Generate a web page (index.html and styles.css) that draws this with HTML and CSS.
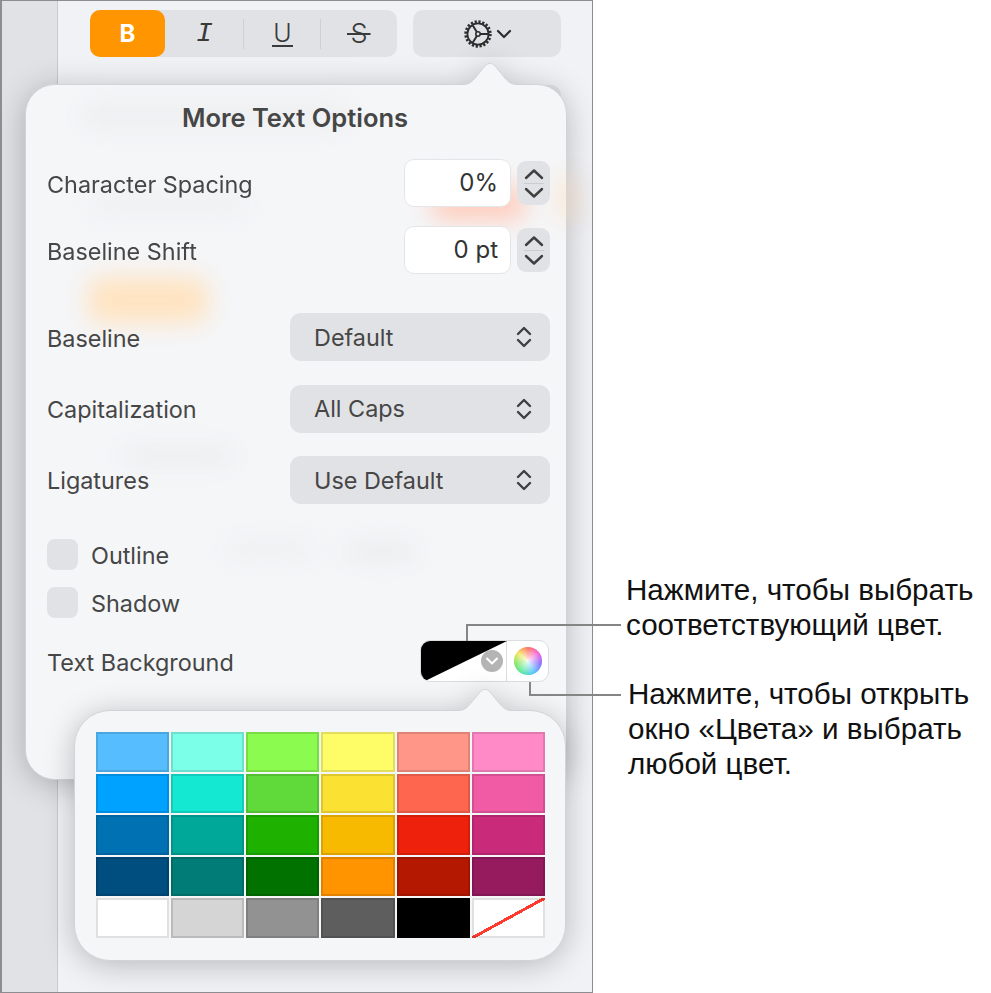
FILE: index.html
```html
<!DOCTYPE html>
<html lang="ru">
<head>
    <meta charset="UTF-8">
    <title>More Text Options</title>
    <link rel="stylesheet" href="styles.css">
</head>
<body>
    <div class="page">
        <div class="window">
            <div class="sidebar"></div>
            <div class="main">
                <div class="toolbar">
                    <div class="style-group">
                        <div class="style-btn style-bold">B</div>
                        <div class="style-btn style-italic">I</div>
                        <div class="style-btn style-underline"><span>U</span></div>
                        <div class="style-btn style-strike"><span>S</span></div>
                    </div>
                    <div class="gear-btn">
                        <svg class="gear-icon" width="30" height="30" viewBox="0 0 30 30">
                            <circle cx="15" cy="15" r="12.4" fill="none" stroke="#2d2d2d" stroke-width="2.6" stroke-dasharray="2.2 1.7"/>
                            <circle cx="15" cy="15" r="10.6" fill="none" stroke="#2d2d2d" stroke-width="1.8"/>
                            <circle cx="15" cy="15" r="2.2" fill="none" stroke="#2d2d2d" stroke-width="1.6"/>
                            <path d="M17 15H25M14 13.2L9.8 6.5M14 16.8L9.8 23.5" fill="none" stroke="#2d2d2d" stroke-width="2"/>
                        </svg>
                        <svg width="16" height="10" viewBox="0 0 16 10">
                            <path d="M2 2L8 8L14 2" fill="none" stroke="#2d2d2d" stroke-width="2.2" stroke-linecap="round" stroke-linejoin="round"/>
                        </svg>
                    </div>
                </div>
                <div class="covered-row"></div>
            </div>

            <div class="popover options">
                <svg class="arrow arrow-options" width="64" height="24" viewBox="0 0 64 24">
                    <path d="M0 22.5H4C10 22.5 13 20 17 15L26 4C29 0.5 33 0.5 36 4L45 15C49 20 52 22.5 58 22.5H64V24H0Z" fill="#f5f6f8"/>
                    <path d="M0 22.5H4C10 22.5 13 20 17 15L26 4C29 0.5 33 0.5 36 4L45 15C49 20 52 22.5 58 22.5H64" fill="none" stroke="#d2d3d6"/>
                </svg>
                <span class="smear smear-title"></span>
                <span class="smear smear-sub"></span>
                <span class="smear smear-red"></span>
                <span class="smear smear-edge"></span>
                <span class="smear smear-orange"></span>
                <span class="smear smear-mid"></span>
                <span class="smear smear-low"></span>
                <span class="smear smear-low-right"></span>

                <h2 class="title">More Text Options</h2>

                <div class="row row-first">
                    <span class="label">Character Spacing</span>
                    <div class="spin">
                        <div class="spin-input">0%</div>
                        <div class="stepper">
                            <svg width="22" height="12" viewBox="0 0 22 12"><path d="M3 10L11 2.5L19 10" class="chev"/></svg>
                            <i class="stepper-line"></i>
                            <svg width="22" height="12" viewBox="0 0 22 12"><path d="M3 2L11 9.5L19 2" class="chev"/></svg>
                        </div>
                    </div>
                </div>
                <div class="row row-second">
                    <span class="label">Baseline Shift</span>
                    <div class="spin">
                        <div class="spin-input">0 pt</div>
                        <div class="stepper">
                            <svg width="22" height="12" viewBox="0 0 22 12"><path d="M3 10L11 2.5L19 10" class="chev"/></svg>
                            <i class="stepper-line"></i>
                            <svg width="22" height="12" viewBox="0 0 22 12"><path d="M3 2L11 9.5L19 2" class="chev"/></svg>
                        </div>
                    </div>
                </div>

                <div class="row row-select-first">
                    <span class="label">Baseline</span>
                    <div class="select">Default
                        <svg width="16" height="24" viewBox="0 0 16 24"><path d="M2 9L8 3L14 9M2 15L8 21L14 15" class="chev"/></svg>
                    </div>
                </div>
                <div class="row row-select">
                    <span class="label">Capitalization</span>
                    <div class="select">All Caps
                        <svg width="16" height="24" viewBox="0 0 16 24"><path d="M2 9L8 3L14 9M2 15L8 21L14 15" class="chev"/></svg>
                    </div>
                </div>
                <div class="row row-select">
                    <span class="label">Ligatures</span>
                    <div class="select">Use Default
                        <svg width="16" height="24" viewBox="0 0 16 24"><path d="M2 9L8 3L14 9M2 15L8 21L14 15" class="chev"/></svg>
                    </div>
                </div>

                <div class="check check-first"><span class="box"></span><span class="label">Outline</span></div>
                <div class="check"><span class="box"></span><span class="label">Shadow</span></div>

                <div class="row row-well">
                    <span class="label">Text Background</span>
                    <div class="well">
                        <div class="well-fill">
                            <svg width="86" height="40" viewBox="0 0 86 40"><path d="M0 0H86L4 40H0Z" fill="#000"/></svg>
                            <span class="well-menu">
                                <svg width="14" height="9" viewBox="0 0 14 9"><path d="M2 1.5L7 6.5L12 1.5" fill="none" stroke="#fff" stroke-width="2" stroke-linecap="round" stroke-linejoin="round"/></svg>
                            </span>
                        </div>
                        <div class="well-wheel"><span class="wheel"></span></div>
                    </div>
                </div>
            </div>

            <div class="popover palette">
                <svg class="arrow arrow-palette" width="64" height="24" viewBox="0 0 64 24">
                    <path d="M0 22.5H4C10 22.5 13 20 17 15L26 4C29 0.5 33 0.5 36 4L45 15C49 20 52 22.5 58 22.5H64V24H0Z" fill="#f5f6f8"/>
                    <path d="M0 22.5H4C10 22.5 13 20 17 15L26 4C29 0.5 33 0.5 36 4L45 15C49 20 52 22.5 58 22.5H64" fill="none" stroke="#d2d3d6"/>
                </svg>
                <div class="swatches" id="swatches"></div>
            </div>
        </div>

        <div class="callouts">
            <p class="callout callout-first">Нажмите, чтобы выбрать соответствующий цвет.</p>
            <p class="callout callout-second">Нажмите, чтобы открыть окно «Цвета» и выбрать любой цвет.</p>
        </div>
        <div class="leader leader-fill"></div>
        <div class="leader leader-wheel"></div>
    </div>

    <script>
        const colors = [
            '#56bdff', '#7bffe9', '#8bfb4f', '#fffd67', '#ff9688', '#ff8ac7',
            '#00a2ff', '#15e8d2', '#60d93a', '#fbe232', '#ff6650', '#f15ba5',
            '#0072b4', '#00a89a', '#1eb100', '#f8ba00', '#ee220c', '#c92b7a',
            '#004d80', '#017c76', '#017100', '#ff9300', '#b51800', '#951a5e',
            '#ffffff', '#d5d5d5', '#929292', '#5e5e5e', '#000000', null
        ];
        const grid = document.getElementById('swatches');
        colors.forEach(color => {
            const swatch = document.createElement('div');
            swatch.className = color ? 'swatch' : 'swatch swatch-none';
            if (color) swatch.style.background = color;
            grid.appendChild(swatch);
        });
    </script>
</body>
</html>
```

FILE: styles.css
```css
:root {
    --control: #e1e2e5;
    --panel: #f5f6f8;
    --ink: #464646;
}

* {
    box-sizing: border-box;
}

body {
    margin: 0;
    background: #fff;
    font-family: 'Inter', 'Liberation Sans', sans-serif;
}

.page {
    position: relative;
    display: flex;
    width: 991px;
    height: 993px;
    overflow: hidden;
}

.window {
    position: relative;
    display: flex;
    flex: none;
    width: 593px;
    height: 993px;
    border: 1px solid #8b8d90;
    border-left-width: 2px;
    overflow: hidden;
}

.sidebar {
    flex: none;
    width: 55px;
    background: #e0e2e6;
}

.main {
    flex: 1;
    padding: 9px 30px 0 32px;
    background: #f1f2f6;
    border-left: 1px solid #c9cacd;
}

.toolbar {
    display: flex;
    gap: 16px;
}

.style-group {
    display: flex;
    width: 307px;
    height: 47px;
    background: var(--control);
    border-radius: 10px;
}

.style-btn {
    display: flex;
    justify-content: center;
    align-items: center;
    height: 47px;
    color: #3a3a3a;
    font-size: 24px;
}

.style-bold {
    width: 75px;
    background: #ff9500;
    border-radius: 10px;
    color: #fff;
    font-weight: 700;
}

.style-italic {
    width: 79px;
    font-family: 'Liberation Mono', monospace;
    font-size: 28px;
    font-style: italic;
    background: linear-gradient(#cfd0d3, #cfd0d3) right center / 1px 30px no-repeat;
}

.style-underline {
    width: 77px;
    font-size: 25px;
    background: linear-gradient(#cfd0d3, #cfd0d3) right center / 1px 30px no-repeat;
}

.style-underline span {
    font-weight: 300;
    border-bottom: 2px solid #3a3a3a;
    line-height: 24px;
    padding: 0 1px;
}

.style-strike {
    flex: 1;
    font-size: 27px;
}

.style-strike span {
    padding: 0 3px;
    font-weight: 300;
    background: linear-gradient(#3a3a3a, #3a3a3a) center 52% / 100% 2px no-repeat;
}

.gear-btn {
    display: flex;
    justify-content: center;
    align-items: center;
    gap: 3px;
    width: 148px;
    height: 47px;
    background: var(--control);
    border-radius: 10px;
}

.covered-row {
    width: 481px;
    height: 46px;
    margin: 28px 0 0 -10px;
    background: var(--control);
    border-radius: 10px;
}

.popover {
    position: absolute;
    background: var(--panel);
    border: 1px solid #d2d3d6;
    filter: drop-shadow(0 4px 15px rgba(0, 0, 0, 0.24));
}

.options {
    top: 83px;
    left: 23px;
    width: 542px;
    height: 696px;
    padding: 16px 16px 0 21px;
    border-radius: 30px;
}

.palette {
    top: 709px;
    left: 72px;
    width: 492px;
    height: 251px;
    padding: 21px 20px 0 21px;
    border-radius: 36px;
}

.arrow {
    position: absolute;
    top: -23.5px;
}

.arrow-options {
    left: 433px;
}

.arrow-palette {
    left: 379px;
}

.smear {
    position: absolute;
    border-radius: 14px;
    filter: blur(12px);
}

.smear-title {
    top: 20px;
    left: 55px;
    width: 270px;
    height: 22px;
    background: #ecedef;
}

.smear-sub {
    top: 114px;
    left: 65px;
    width: 155px;
    height: 14px;
    background: #ecedef;
}

.smear-red {
    top: 100px;
    left: 405px;
    width: 95px;
    height: 36px;
    background: #ffcdbd;
}

.smear-edge {
    top: 90px;
    right: -6px;
    width: 10px;
    height: 46px;
    background: #ffdcb8;
}

.smear-orange {
    top: 192px;
    left: 62px;
    width: 120px;
    height: 46px;
    background: #ffe3c0;
}

.smear-mid {
    top: 364px;
    left: 95px;
    width: 115px;
    height: 14px;
    background: #eaebed;
}

.smear-low {
    top: 458px;
    left: 200px;
    width: 90px;
    height: 14px;
    background: #ecedef;
}

.smear-low-right {
    top: 458px;
    left: 320px;
    width: 70px;
    height: 16px;
    background: #e9eaec;
}

.title {
    position: relative;
    margin: 0 7px 24px 0;
    color: var(--ink);
    font-size: 25.5px;
    font-weight: 600;
    line-height: 34px;
    text-align: center;
}

.row {
    position: relative;
    display: flex;
    justify-content: space-between;
    align-items: center;
    height: 48px;
}

.row-second {
    margin-top: 19px;
}

.row-select-first {
    margin-top: 39px;
}

.row-select {
    margin-top: 23.5px;
}

.row-well {
    align-items: center;
    height: 42px;
    margin-top: 22px;
}

.label {
    color: var(--ink);
    font-size: 23.4px;
    line-height: 30px;
}

.row .label {
    position: relative;
    top: 2px;
}

.row-select .label {
    top: 1px;
}

.spin {
    display: flex;
    align-items: center;
    gap: 6px;
}

.spin-input {
    width: 107px;
    height: 48px;
    padding-right: 12px;
    background: #fff;
    border: 1px solid #e4e5e8;
    border-radius: 10px;
    color: #333;
    font-size: 24px;
    line-height: 46px;
    text-align: right;
}

.stepper {
    display: flex;
    flex-direction: column;
    align-items: center;
    justify-content: center;
    gap: 3px;
    width: 33px;
    height: 44px;
    background: var(--control);
    border-radius: 9px;
}

.stepper-line {
    width: 20px;
    height: 1px;
    background: #cbccd0;
}

.chev {
    fill: none;
    stroke: #3f3f3f;
    stroke-width: 2.4;
    stroke-linecap: round;
    stroke-linejoin: round;
}

.select {
    display: flex;
    justify-content: space-between;
    align-items: center;
    width: 260px;
    height: 48px;
    padding: 0 18px 0 24px;
    background: var(--control);
    border-radius: 11px;
    color: var(--ink);
    font-size: 23.4px;
}

.check {
    position: relative;
    display: flex;
    align-items: center;
    gap: 13px;
    height: 31px;
    margin-top: 17px;
}

.check-first {
    margin-top: 35px;
}

.check .label {
    position: relative;
    top: 1px;
}

.box {
    width: 31px;
    height: 31px;
    background: var(--control);
    border-radius: 8px;
}

.well {
    display: flex;
    width: 129px;
    height: 42px;
    margin-right: 1px;
    background: #fff;
    border: 1px solid #dcdde0;
    border-radius: 10px;
    overflow: hidden;
}

.well-fill {
    position: relative;
    width: 86px;
    height: 40px;
    border-right: 1px solid #dcdde0;
}

.well-fill svg {
    display: block;
}

.well-menu {
    position: absolute;
    right: 3px;
    top: 9px;
    display: flex;
    justify-content: center;
    align-items: center;
    width: 22px;
    height: 22px;
    background: #b4b4b4;
    border-radius: 50%;
}

.well-wheel {
    flex: 1;
    display: flex;
    justify-content: center;
    align-items: center;
}

.wheel {
    width: 28px;
    height: 28px;
    border-radius: 50%;
    background:
        radial-gradient(circle, rgba(255, 255, 255, 0.9) 0%, rgba(255, 255, 255, 0.45) 45%, rgba(255, 255, 255, 0) 85%),
        conic-gradient(#ff4d3a, #f23fd0, #6a4dff, #2fb8ff, #2fe08e, #5fe03a, #f2e23a, #ff4d3a);
}

.swatches {
    display: grid;
    grid-template-columns: repeat(6, 1fr);
    grid-template-rows: repeat(5, 1fr);
    gap: 2px;
    width: 449px;
    height: 206px;
}

.swatch {
    box-shadow: inset 0 0 0 2px rgba(0, 0, 0, 0.12);
}

.swatch-none {
    background: linear-gradient(to top left, transparent calc(50% - 1.5px), #ff3b30 calc(50% - 1.5px), #ff3b30 calc(50% + 1.5px), transparent calc(50% + 1.5px)), #fff;
}

.callouts {
    width: 398px;
    padding: 572px 0 0 33px;
}

.callout {
    margin: 0;
    color: #111;
    font-family: 'Liberation Sans', sans-serif;
    font-size: 29.6px;
    line-height: 35px;
}

.callout-first {
    width: 360px;
}

.callout-second {
    width: 350px;
    margin: 34px 0 0 2px;
}

.leader {
    position: absolute;
    border-color: #858585;
    border-style: solid;
}

.leader-fill {
    top: 624px;
    left: 466px;
    width: 155px;
    height: 17px;
    border-width: 2px 0 0 2px;
}

.leader-wheel {
    top: 682px;
    left: 529px;
    width: 92px;
    height: 14px;
    border-width: 0 0 2px 2px;
}
```
